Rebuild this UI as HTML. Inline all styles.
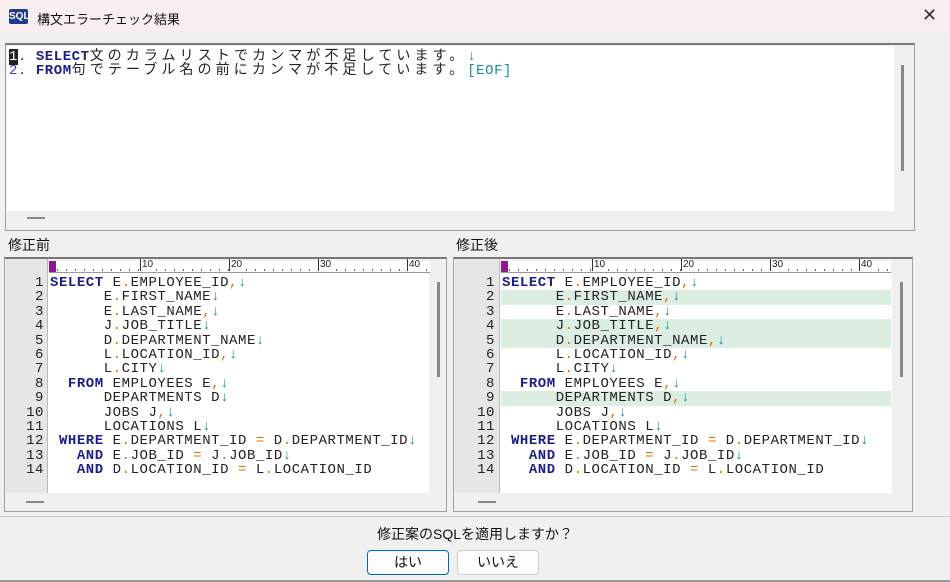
<!DOCTYPE html>
<html><head><meta charset="utf-8"><style>
*{margin:0;padding:0;box-sizing:border-box}
body{width:950px;height:582px;background:#f0f0f0;position:relative;overflow:hidden;font-family:"Liberation Sans","Noto Sans CJK JP",sans-serif;}
.abs{position:absolute}
.title{left:0;top:0;width:950px;height:33px;background:#f8eeed}
.mono{font-family:"Liberation Mono","Noto Sans CJK JP",monospace;font-size:14px;letter-spacing:0.55px;line-height:14.4px;white-space:pre;color:#222}
.j{letter-spacing:4.1px}
.k{color:#1c1c8c;font-weight:bold}
.o{color:#e07000}
.a{color:#10909a}
.n{color:#3a3ad0}
.frame{border:1px solid #a0a0a0;border-top:2px solid #777;background:#f0f0f0}
.gut{background:#e6e6e6;border-right:1px solid #bbb}
.ruler{height:12px;background:#fff;border-bottom:1px solid #999;
background-image:repeating-linear-gradient(90deg,transparent 0,transparent 8px,#666 8px,#666 9px);background-size:100% 2px;background-repeat:repeat-x;background-position:0 8px}
.rn{position:absolute;top:-2px;font-family:"Liberation Sans",sans-serif;font-size:10px;color:#222;border-left:1px solid #333;padding-left:1px;height:12px;line-height:12px;background:#fff}
.hl{position:absolute;height:14.4px;background:#dcede2}
.sb{width:3px;background:#888}
.dash{width:18px;height:2px;background:#888}
.btn{top:550px;height:25px;width:82px;border:1px solid #ccc;border-radius:4px;background:#fdfdfd;font-size:14px;text-align:center;line-height:23px;color:#111}
</style></head><body>
<div class="abs title"></div>
<div class="abs" style="left:9px;top:9px;width:19px;height:15px;background:#1e3c8c;color:#fff;font:bold 10px 'Liberation Sans';line-height:15px;text-align:center;border-radius:2px">SQL</div>
<div class="abs" style="left:37px;top:9px;font-size:13px;color:#111">構文エラーチェック結果</div>
<div class="abs" style="left:922px;top:5px;font-size:18px;color:#333">✕</div>

<!-- top pane -->
<div class="abs frame" style="left:5px;top:43px;width:910px;height:188px"></div>
<div class="abs" style="left:7px;top:46px;width:887px;height:165px;background:#fff"></div>
<div class="abs sb" style="left:901px;top:65px;height:106px"></div>
<div class="abs dash" style="left:27px;top:217px"></div>
<div class="abs mono" style="left:9px;top:50px"><span style="background:#222;color:#fff">1</span><span class="n">.</span> <span class="k">SELECT</span><span class="j">文のカラムリストでカンマが不足しています。</span><span class="a">↓</span>
<span class="n">2.</span> <span class="k">FROM</span><span class="j">句でテーブル名の前にカンマが不足しています。</span><span class="a">[EOF]</span></div>

<div class="abs" style="left:8px;top:235px;font-size:14px;color:#111">修正前</div>
<div class="abs" style="left:456px;top:235px;font-size:14px;color:#111">修正後</div>

<!-- left pane -->
<div class="abs frame" style="left:4px;top:257px;width:443px;height:255px"></div>
<div class="abs gut" style="left:6px;top:259px;width:42px;height:234px"></div>
<div class="abs" style="left:48px;top:273px;width:381px;height:220px;background:#fff"></div>
<div class="abs ruler" style="left:49px;top:261px;width:381px">
<span class="abs" style="left:0;top:0;width:7px;height:11px;background:#8a1a8a"></span>
<span class="rn" style="left:91px">10</span><span class="rn" style="left:180px">20</span><span class="rn" style="left:269px">30</span><span class="rn" style="left:358px">40</span></div>
<div class="abs sb" style="left:437px;top:282px;height:95px"></div>
<div class="abs dash" style="left:26px;top:501px"></div>
<div class="abs mono" style="left:6px;top:276px;width:38px;text-align:right;color:#222">1
2
3
4
5
6
7
8
9
10
11
12
13
14</div>
<div class="abs mono" style="left:50px;top:276px"><span class="k">SELECT</span> E<span class="o">.</span>EMPLOYEE_ID<span class="o">,</span><span class="a">↓</span>
      E<span class="o">.</span>FIRST_NAME<span class="a">↓</span>
      E<span class="o">.</span>LAST_NAME<span class="o">,</span><span class="a">↓</span>
      J<span class="o">.</span>JOB_TITLE<span class="a">↓</span>
      D<span class="o">.</span>DEPARTMENT_NAME<span class="a">↓</span>
      L<span class="o">.</span>LOCATION_ID<span class="o">,</span><span class="a">↓</span>
      L<span class="o">.</span>CITY<span class="a">↓</span>
  <span class="k">FROM</span> EMPLOYEES E<span class="o">,</span><span class="a">↓</span>
      DEPARTMENTS D<span class="a">↓</span>
      JOBS J<span class="o">,</span><span class="a">↓</span>
      LOCATIONS L<span class="a">↓</span>
 <span class="k">WHERE</span> E<span class="o">.</span>DEPARTMENT_ID <span class="o">=</span> D<span class="o">.</span>DEPARTMENT_ID<span class="a">↓</span>
   <span class="k">AND</span> E<span class="o">.</span>JOB_ID <span class="o">=</span> J<span class="o">.</span>JOB_ID<span class="a">↓</span>
   <span class="k">AND</span> D<span class="o">.</span>LOCATION_ID <span class="o">=</span> L<span class="o">.</span>LOCATION_ID</div>

<!-- right pane -->
<div class="abs frame" style="left:453px;top:257px;width:460px;height:255px"></div>
<div class="abs gut" style="left:455px;top:259px;width:45px;height:234px"></div>
<div class="abs" style="left:500px;top:273px;width:392px;height:220px;background:#fff"></div>
<div class="abs ruler" style="left:501px;top:261px;width:390px">
<span class="abs" style="left:0;top:0;width:7px;height:11px;background:#8a1a8a"></span>
<span class="rn" style="left:91px">10</span><span class="rn" style="left:180px">20</span><span class="rn" style="left:269px">30</span><span class="rn" style="left:358px">40</span></div>
<div class="hl" style="left:501px;top:290.4px;width:390px"></div>
<div class="hl" style="left:501px;top:319.2px;width:390px;height:28.8px"></div>
<div class="hl" style="left:501px;top:391.2px;width:390px"></div>
<div class="abs sb" style="left:900px;top:282px;height:95px"></div>
<div class="abs dash" style="left:478px;top:501px"></div>
<div class="abs mono" style="left:455px;top:276px;width:40px;text-align:right;color:#222">1
2
3
4
5
6
7
8
9
10
11
12
13
14</div>
<div class="abs mono" style="left:502px;top:276px"><span class="k">SELECT</span> E<span class="o">.</span>EMPLOYEE_ID<span class="o">,</span><span class="a">↓</span>
      E<span class="o">.</span>FIRST_NAME<span class="o">,</span><span class="a">↓</span>
      E<span class="o">.</span>LAST_NAME<span class="o">,</span><span class="a">↓</span>
      J<span class="o">.</span>JOB_TITLE<span class="o">,</span><span class="a">↓</span>
      D<span class="o">.</span>DEPARTMENT_NAME<span class="o">,</span><span class="a">↓</span>
      L<span class="o">.</span>LOCATION_ID<span class="o">,</span><span class="a">↓</span>
      L<span class="o">.</span>CITY<span class="a">↓</span>
  <span class="k">FROM</span> EMPLOYEES E<span class="o">,</span><span class="a">↓</span>
      DEPARTMENTS D<span class="o">,</span><span class="a">↓</span>
      JOBS J<span class="o">,</span><span class="a">↓</span>
      LOCATIONS L<span class="a">↓</span>
 <span class="k">WHERE</span> E<span class="o">.</span>DEPARTMENT_ID <span class="o">=</span> D<span class="o">.</span>DEPARTMENT_ID<span class="a">↓</span>
   <span class="k">AND</span> E<span class="o">.</span>JOB_ID <span class="o">=</span> J<span class="o">.</span>JOB_ID<span class="a">↓</span>
   <span class="k">AND</span> D<span class="o">.</span>LOCATION_ID <span class="o">=</span> L<span class="o">.</span>LOCATION_ID</div>

<div class="abs" style="left:0;top:516px;width:950px;height:1px;background:#c8c8c8"></div>
<div class="abs" style="left:0;top:524px;width:950px;text-align:center;font-size:14px;color:#111">修正案のSQLを適用しますか？</div>
<div class="abs btn" style="left:367px;border:1px solid #0067c0">はい</div>
<div class="abs btn" style="left:457px">いいえ</div>
<div class="abs" style="left:0;top:580px;width:950px;height:2px;background:#999"></div>
</body></html>
